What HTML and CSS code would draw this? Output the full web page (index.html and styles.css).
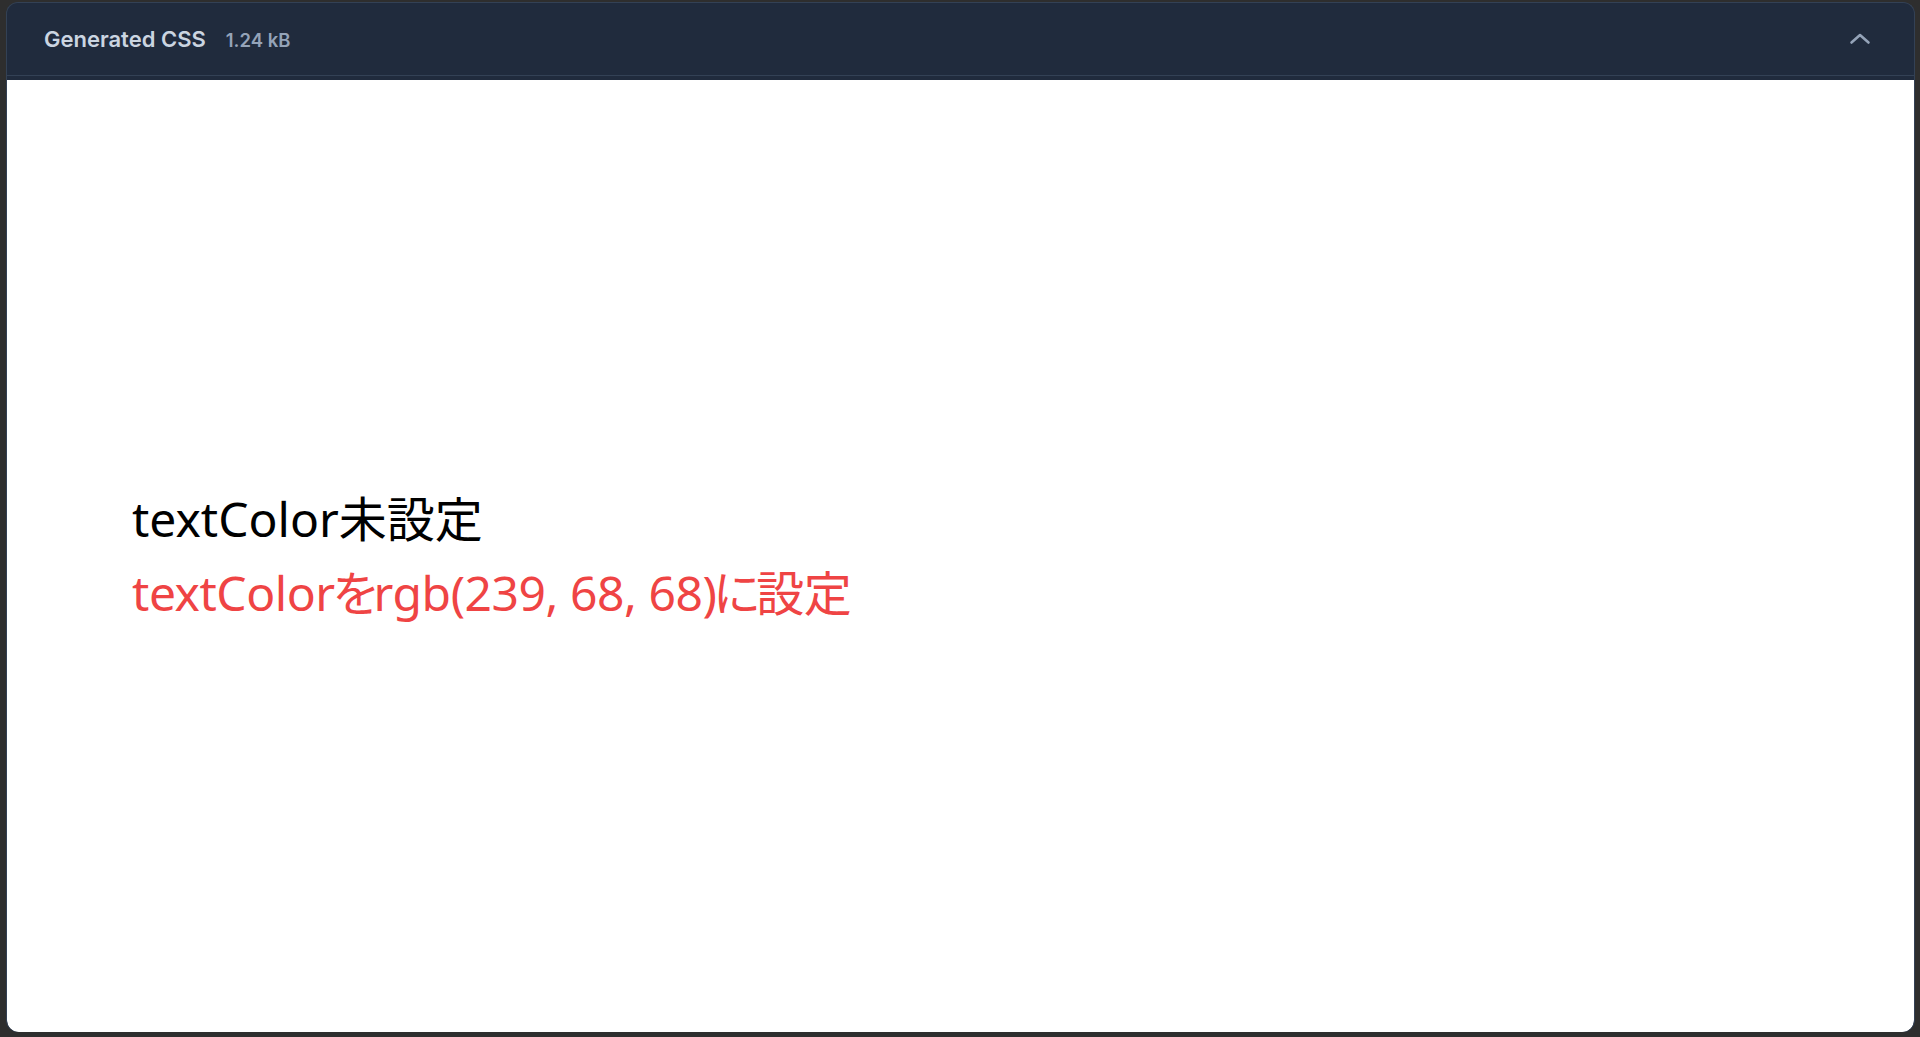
FILE: index.html
```html
<!DOCTYPE html>
<html lang="ja">
<head>
<meta charset="utf-8">
<title>Generated CSS</title>
<link rel="stylesheet" href="styles.css">
</head>
<body>
<div class="panel">
  <header class="panel-header">
    <div class="title-group">
      <span class="title">Generated CSS</span>
      <span class="size">1.24 kB</span>
    </div>
    <svg class="chevron" width="24" height="24" viewBox="0 0 24 24" fill="none" stroke="currentColor" stroke-width="2.6" stroke-linecap="round" stroke-linejoin="round"><path d="M3.5 15.5 L12 8 L20.5 15.5"/></svg>
  </header>
  <div class="preview">
    <p class="line">textColor未設定</p>
    <p class="line red">textColor<span class="kana-wo">を</span>rgb(239, 68, 68)<span class="kana-ni">に</span>設定</p>
  </div>
</div>
</body>
</html>
```

FILE: styles.css
```css
html, body {
  margin: 0;
  padding: 0;
  height: 100%;
}
body {
  background: #2e2e2e;
  padding: 2px 5px 5px 6px;
  box-sizing: border-box;
  display: flex;
}
.panel {
  flex: 1;
  display: flex;
  flex-direction: column;
  background: #202b3d;
  border: 1px solid #334155;
  border-bottom: none;
  border-radius: 12px;
  overflow: hidden;
}
.panel-header {
  height: 72px;
  flex: none;
  display: flex;
  align-items: center;
  justify-content: space-between;
  padding: 0 42px 0 37px;
  border-bottom: 1px solid #334155;
  margin-bottom: 4px;
  font-family: Inter, "Liberation Sans", sans-serif;
}
.title-group {
  display: flex;
  align-items: baseline;
  gap: 20px;
}
.title {
  color: #cbd5e1;
  font-size: 22px;
  font-weight: 600;
}
.size {
  color: #94a3b8;
  font-size: 18.5px;
  font-weight: 600;
}
.chevron {
  color: #94a3b8;
  display: block;
}
.preview {
  flex: 1;
  background: #ffffff;
  border-radius: 0 0 12px 12px;
  display: flex;
  flex-direction: column;
  justify-content: center;
  padding: 0 0 0 125px;
  font-family: "Noto Sans", "Noto Sans CJK JP", sans-serif;
  font-feature-settings: "palt" 1;
}
.line {
  margin: 0;
  font-size: 48px;
  line-height: 74px;
  color: #000000;
}
.red {
  color: #ef4444;
  letter-spacing: -0.45px;
}
.kana-wo {
  margin: 0 -3px 0 -2px;
}
.kana-ni {
  margin: 0 -3px 0 -3px;
}
```
